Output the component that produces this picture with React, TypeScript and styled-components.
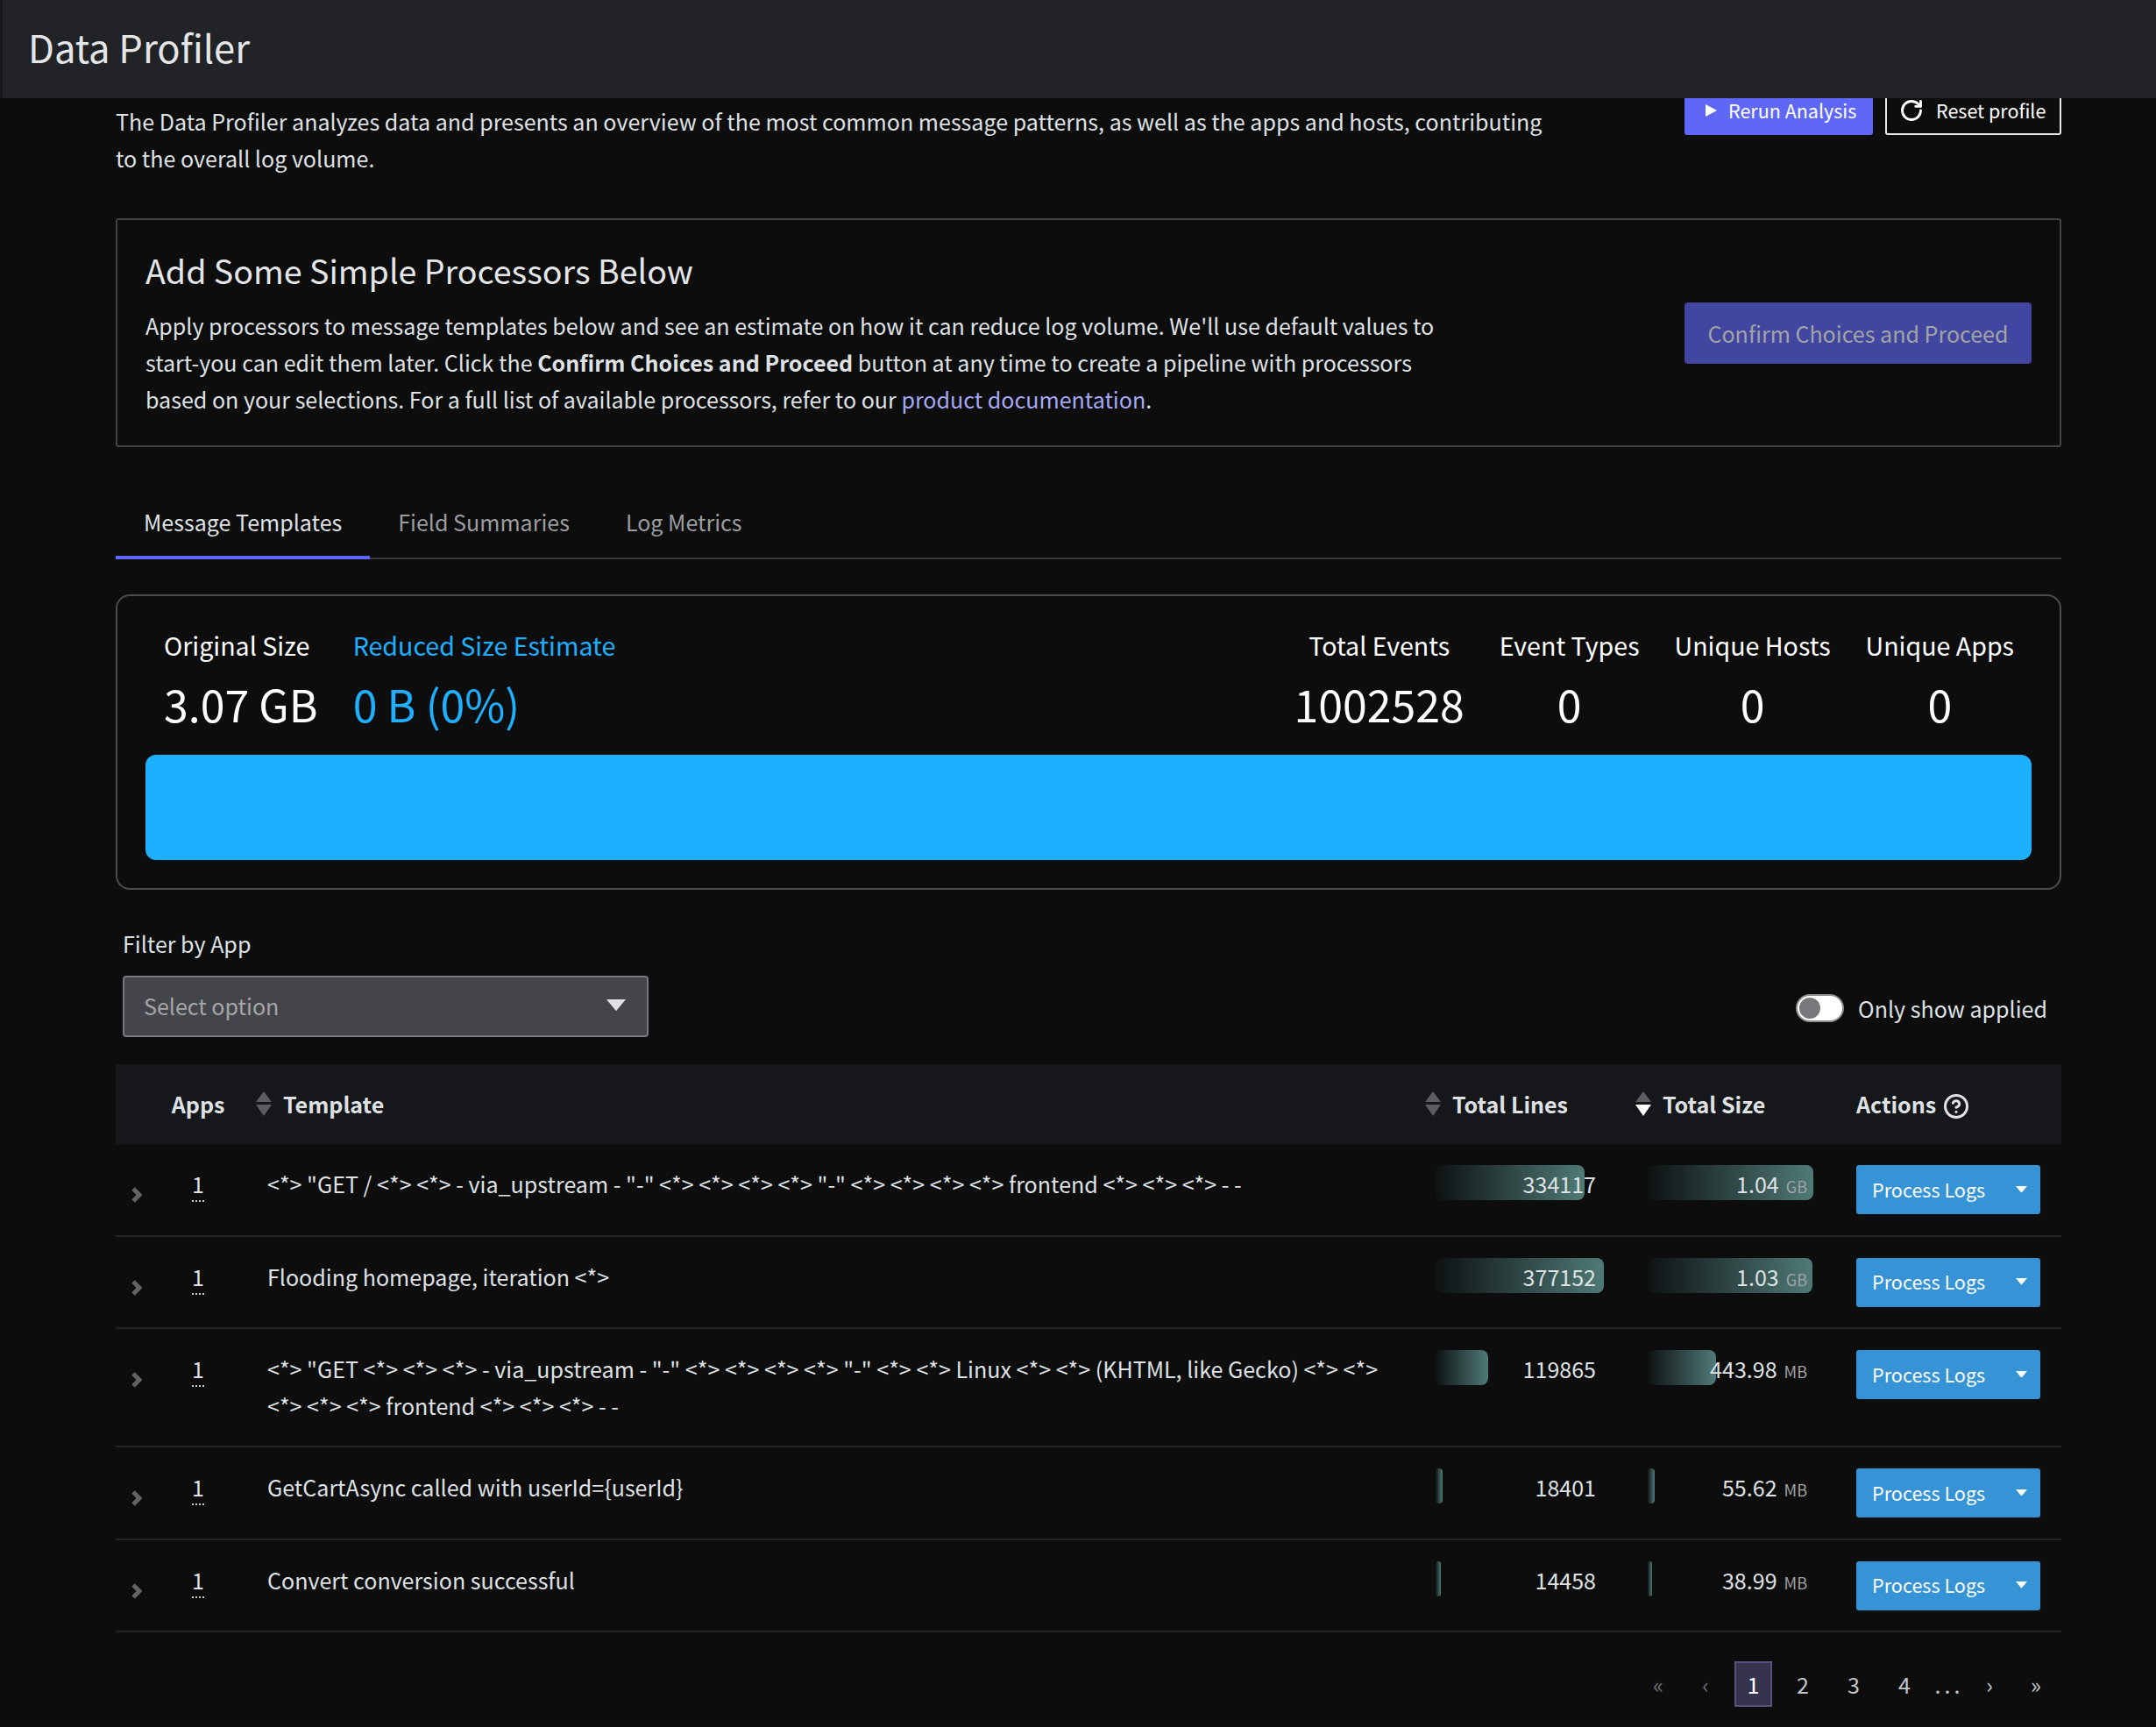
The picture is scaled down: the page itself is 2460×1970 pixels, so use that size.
import React from 'react'
import styled, { createGlobalStyle } from 'styled-components'
import { CircleHelp, RotateCw } from 'lucide-react'

const GlobalStyle = createGlobalStyle`
  html, body {
    margin: 0;
    background: #0d0d0e;
  }
  body {
    font-family: "Noto Sans CJK SC", "Noto Sans", sans-serif;
    color: #dfe1e4;
    font-size: 25.06px;
    line-height: 42px;
  }
  * {
    box-sizing: border-box;
  }
`

const Page = styled.div`
  width: 2460px;
  height: 1970px;
  overflow: hidden;
  background: #0d0d0e;
`

const Header = styled.header`
  position: relative;
  z-index: 2;
  height: 112px;
  padding-left: 29px;
  display: flex;
  align-items: center;
  background: #212326;
  border-left: 3px solid #17181a;
`

const Title = styled.h1`
  margin: 0 0 4px;
  font-size: 43.5px;
  line-height: 60px;
  font-weight: 400;
  color: #e4e6e8;
`

const Main = styled.main`
  margin-top: -18px;
  padding: 0 108px 0 132px;
`

const TopRow = styled.div`
  display: flex;
  justify-content: space-between;
  align-items: flex-start;
`

const Description = styled.p`
  margin: 23px 0 0;
  width: 1640px;
`

const TopActions = styled.div`
  display: flex;
  gap: 14px;
`

const RerunButton = styled.button`
  width: 215px;
  height: 60px;
  padding: 4px 0 0 23px;
  display: flex;
  align-items: center;
  gap: 13px;
  border: 0;
  border-radius: 3px;
  background: #5f68f6;
  color: #fff;
  font: inherit;
  font-size: 21.5px;
  line-height: 30px;
  white-space: nowrap;
`

const ResetButton = styled.button`
  width: 201px;
  height: 60px;
  padding: 4px 0 0 14px;
  display: flex;
  align-items: center;
  gap: 14px;
  border: 2px solid #e8e8e8;
  border-radius: 3px;
  background: transparent;
  color: #fff;
  font: inherit;
  font-size: 21.5px;
  line-height: 30px;
  white-space: nowrap;
`

const PromoBox = styled.section`
  margin-top: 48px;
  height: 261px;
  padding: 30px 32px 0;
  display: flex;
  justify-content: space-between;
  border: 2px solid #434446;
  border-radius: 3px;
`

const PromoHeading = styled.h2`
  margin: 0 0 15px;
  font-size: 37.6px;
  line-height: 54px;
  font-weight: 400;
  color: #e4e6e8;
`

const PromoText = styled.p`
  margin: 0;
  width: 1500px;
`

const DocLink = styled.a`
  color: #a6a8f5;
`

const ConfirmButton = styled.button`
  width: 396px;
  height: 70px;
  margin-top: 64px;
  padding-bottom: 2px;
  border: 0;
  border-radius: 4px;
  background: #4146a0;
  color: #a3a3a6;
  font: inherit;
  white-space: nowrap;
`

const Tabs = styled.nav`
  margin-top: 34px;
  height: 94px;
  display: flex;
  border-bottom: 2px solid #3a3b3d;
`

const Tab = styled.div<{ $active?: boolean }>`
  height: 94px;
  padding: 30px 32px 0;
  color: ${p => (p.$active ? '#dfe1e4' : '#9b9da0')};
  border-bottom: ${p => (p.$active ? '4px solid #5f68f6' : '0')};
`

const StatsCard = styled.section`
  margin-top: 40px;
  height: 337px;
  padding: 35px 32px 0;
  border: 2px solid #4c4d4f;
  border-radius: 16px;
`

const StatsRow = styled.div`
  display: flex;
  justify-content: space-between;
`

const StatGroup = styled.div`
  display: flex;
`

const Stat = styled.div<{ $accent?: boolean }>`
  padding: 0 19px 0 21px;
  color: ${p => (p.$accent ? '#1eb0ff' : '#fff')};
`

const CountStat = styled.div`
  padding: 0 20px;
  color: #fff;
  text-align: center;
`

const StatLabel = styled.div`
  font-size: 28.6px;
  line-height: 42px;
`

const StatValue = styled.div`
  margin-top: 10px;
  font-size: 50px;
  line-height: 70px;
`

const SizeBar = styled.div`
  margin-top: 24px;
  height: 120px;
  border-radius: 12px;
  background: #1eb0ff;
`

const FilterRow = styled.div`
  margin-top: 40px;
  padding: 0 16px 0 8px;
  display: flex;
  justify-content: space-between;
  align-items: flex-end;
`

const FilterLabel = styled.div`
  margin-bottom: 16px;
`

const SelectBox = styled.div`
  width: 600px;
  height: 70px;
  padding: 0 24px 2px 22px;
  display: flex;
  justify-content: space-between;
  align-items: center;
  background: #44454a;
  border: 2px solid #77787c;
  border-radius: 4px;
  color: #a5a6a8;
`

const ToggleWrap = styled.div`
  margin-bottom: 12px;
  display: flex;
  align-items: center;
  gap: 16px;
`

const ToggleTrack = styled.div`
  width: 55px;
  height: 32px;
  padding: 2px;
  background: #fff;
  border: 2px solid #8d8e90;
  border-radius: 16px;
`

const ToggleKnob = styled.div`
  width: 24px;
  height: 24px;
  border-radius: 50%;
  background: #77787b;
`

const grid = `
  display: grid;
  grid-template-columns: 48px 92px 1354px 240px 240px 246px;
`

const HeadRow = styled.div`
  ${grid}
  margin-top: 31px;
  height: 91px;
  padding-bottom: 2px;
  align-items: center;
  background: #15171a;
  font-weight: 700;
`

const HeadCell = styled.div<{ $align?: string; $pad?: number }>`
  display: flex;
  align-items: center;
  justify-content: ${p => p.$align || 'flex-start'};
  padding-left: ${p => p.$pad || 0}px;
  gap: 13px;
`

const HelpIcon = styled(CircleHelp)`
  margin: 6px 0 0 -5px;
`

const Row = styled.div`
  ${grid}
  min-height: 105.5px;
  border-bottom: 2px solid #232426;
`

const ExpandCell = styled.div`
  padding: 49px 0 0 18px;
  line-height: 0;
`

const AppsCell = styled.div`
  padding-top: 24px;
  text-align: center;
`

const AppsCount = styled.span`
  display: inline-block;
  height: 40px;
  line-height: 38px;
  border-bottom: 2px dotted #c9cacc;
`

const TemplateCell = styled.div`
  padding: 24px 30px 25px 33px;
`

const MetricCell = styled.div<{ $right: number }>`
  position: relative;
  height: 42px;
  margin-top: 24px;
  padding-right: ${p => p.$right}px;
  text-align: right;
`

const MetricBar = styled.div<{ $left: number }>`
  position: absolute;
  left: ${p => p.$left}px;
  top: 0;
  height: 40px;
  border-radius: 8px;
  background: linear-gradient(90deg, #0e1213 0%, #4f7a76 100%);
`

const MetricText = styled.span`
  position: relative;
`

const Unit = styled.span`
  margin-left: 8px;
  font-size: 18px;
  color: #a0a1a4;
`

const ActionCell = styled.div`
  padding: 24px 0 0 12px;
`

const ProcessButton = styled.button`
  width: 210px;
  height: 56px;
  padding: 0 15px 1px 18px;
  display: flex;
  justify-content: space-between;
  align-items: center;
  border: 0;
  border-radius: 3px;
  background: #3593d6;
  color: #fff;
  font: inherit;
  font-size: 21.6px;
`

const Pager = styled.div`
  margin-top: 33px;
  display: flex;
  justify-content: flex-end;
  align-items: center;
  height: 52px;
`

const PageItem = styled.div<{ $muted?: boolean; $w?: number }>`
  width: ${p => p.$w || 58}px;
  display: flex;
  justify-content: center;
  color: ${p => (p.$muted ? '#6d6e71' : '#c4c5c8')};
`

const PageDots = styled(PageItem)`
  letter-spacing: 4px;
`

const ActivePage = styled.div`
  width: 43px;
  height: 52px;
  margin: 0 6px 0 8px;
  display: flex;
  justify-content: center;
  align-items: center;
  background: #35334d;
  border: 2px solid #55527f;
  color: #fff;
`

function Caret({ size = 18, color = '#fff' }: { size?: number; color?: string }) {
  return (
    <svg width={size} height={size * 0.6} viewBox="0 0 10 6">
      <path d="M0 0h10L5 6z" fill={color} />
    </svg>
  )
}

function SortArrows({ active }: { active?: boolean }) {
  return (
    <svg width="18" height="28" viewBox="0 0 18 28">
      <path d="M9 0l9 12H0z" fill="#5c5d60" />
      <path d="M0 15h18l-9 13z" fill={active ? '#fff' : '#5c5d60'} />
    </svg>
  )
}

function Chevron() {
  return (
    <svg width="12" height="18" viewBox="0 0 12 18">
      <path d="M2 2l7 7-7 7" fill="none" stroke="#626366" strokeWidth="5" />
    </svg>
  )
}

const rows = [
  { text: '<*> "GET / <*> <*> - via_upstream - "-" <*> <*> <*> <*> "-" <*> <*> <*> <*> frontend <*> <*> <*> - -', lines: '334117', lineBar: 170, size: '1.04', unit: 'GB', sizeBar: 189 },
  { text: 'Flooding homepage, iteration <*>', lines: '377152', lineBar: 192, size: '1.03', unit: 'GB', sizeBar: 188 },
  { text: '<*> "GET <*> <*> <*> - via_upstream - "-" <*> <*> <*> <*> "-" <*> <*> Linux <*> <*> (KHTML, like Gecko) <*> <*> <*> <*> <*> frontend <*> <*> <*> - -', lines: '119865', lineBar: 60, size: '443.98', unit: 'MB', sizeBar: 78 },
  { text: 'GetCartAsync called with userId={userId}', lines: '18401', lineBar: 8, size: '55.62', unit: 'MB', sizeBar: 8 },
  { text: 'Convert conversion successful', lines: '14458', lineBar: 6, size: '38.99', unit: 'MB', sizeBar: 5 },
]

const rightStats = [
  { label: 'Total Events', value: '1002528' },
  { label: 'Event Types', value: '0' },
  { label: 'Unique Hosts', value: '0' },
  { label: 'Unique Apps', value: '0' },
]

export default function App() {
  return (
    <Page>
      <GlobalStyle />
      <Header>
        <Title>Data Profiler</Title>
      </Header>
      <Main>
        <TopRow>
          <Description>
            The Data Profiler analyzes data and presents an overview of the most common message patterns, as well as the apps and hosts, contributing to the overall log volume.
          </Description>
          <TopActions>
            <RerunButton>
              <svg width="14" height="14" viewBox="0 0 14 14">
                <path d="M1 0l13 7-13 7z" fill="#fff" />
              </svg>
              Rerun Analysis
            </RerunButton>
            <ResetButton>
              <RotateCw size={28} strokeWidth={2.4} />
              Reset profile
            </ResetButton>
          </TopActions>
        </TopRow>

        <PromoBox>
          <div>
            <PromoHeading>Add Some Simple Processors Below</PromoHeading>
            <PromoText>
              Apply processors to message templates below and see an estimate on how it can reduce log volume. We'll use default values to start-you can edit them later. Click the <b>Confirm Choices and Proceed</b> button at any time to create a pipeline with processors based on your selections. For a full list of available processors, refer to our <DocLink>product documentation</DocLink>.
            </PromoText>
          </div>
          <ConfirmButton>Confirm Choices and Proceed</ConfirmButton>
        </PromoBox>

        <Tabs>
          <Tab $active>Message Templates</Tab>
          <Tab>Field Summaries</Tab>
          <Tab>Log Metrics</Tab>
        </Tabs>

        <StatsCard>
          <StatsRow>
            <StatGroup>
              <Stat>
                <StatLabel>Original Size</StatLabel>
                <StatValue>3.07 GB</StatValue>
              </Stat>
              <Stat $accent>
                <StatLabel>Reduced Size Estimate</StatLabel>
                <StatValue>0 B (0%)</StatValue>
              </Stat>
            </StatGroup>
            <StatGroup>
              {rightStats.map(s => (
                <CountStat key={s.label}>
                  <StatLabel>{s.label}</StatLabel>
                  <StatValue>{s.value}</StatValue>
                </CountStat>
              ))}
            </StatGroup>
          </StatsRow>
          <SizeBar />
        </StatsCard>

        <FilterRow>
          <div>
            <FilterLabel>Filter by App</FilterLabel>
            <SelectBox>
              Select option
              <Caret size={22} color="#dfe1e4" />
            </SelectBox>
          </div>
          <ToggleWrap>
            <ToggleTrack>
              <ToggleKnob />
            </ToggleTrack>
            Only show applied
          </ToggleWrap>
        </FilterRow>

        <HeadRow>
          <div />
          <HeadCell $align="center">Apps</HeadCell>
          <HeadCell $pad={20}>
            <SortArrows />
            Template
          </HeadCell>
          <HeadCell>
            <SortArrows />
            Total Lines
          </HeadCell>
          <HeadCell>
            <SortArrows active />
            Total Size
          </HeadCell>
          <HeadCell $pad={12}>
            Actions
            <HelpIcon size={30} strokeWidth={2.4} />
          </HeadCell>
        </HeadRow>

        {rows.map(r => (
          <Row key={r.text}>
            <ExpandCell>
              <Chevron />
            </ExpandCell>
            <AppsCell>
              <AppsCount>1</AppsCount>
            </AppsCell>
            <TemplateCell>{r.text}</TemplateCell>
            <MetricCell $right={45}>
              <MetricBar $left={12} style={{ width: r.lineBar }} />
              <MetricText>{r.lines}</MetricText>
            </MetricCell>
            <MetricCell $right={44}>
              <MetricBar $left={14} style={{ width: r.sizeBar }} />
              <MetricText>
                {r.size}
                <Unit>{r.unit}</Unit>
              </MetricText>
            </MetricCell>
            <ActionCell>
              <ProcessButton>
                Process Logs
                <Caret size={13} />
              </ProcessButton>
            </ActionCell>
          </Row>
        ))}

        <Pager>
          <PageItem $muted>«</PageItem>
          <PageItem $muted $w={50}>‹</PageItem>
          <ActivePage>1</ActivePage>
          <PageItem>2</PageItem>
          <PageItem>3</PageItem>
          <PageItem>4</PageItem>
          <PageDots $w={44}>...</PageDots>
          <PageItem $w={48}>›</PageItem>
          <PageItem>»</PageItem>
        </Pager>
      </Main>
    </Page>
  )
}
